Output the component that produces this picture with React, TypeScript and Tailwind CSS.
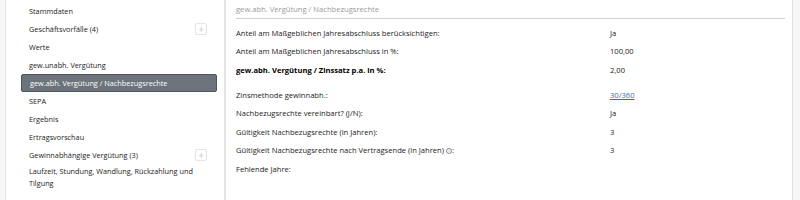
import React from "react";

const navItems: { label: string; plus?: boolean; active?: boolean }[] = [
  { label: "Stammdaten" },
  { label: "Geschäftsvorfälle (4)", plus: true },
  { label: "Werte" },
  { label: "gew.unabh. Vergütung" },
  { label: "gew.abh. Vergütung / Nachbezugsrechte", active: true },
  { label: "SEPA" },
  { label: "Ergebnis" },
  { label: "Ertragsvorschau" },
  { label: "Gewinnabhängige Vergütung (3)", plus: true },
  { label: "Laufzeit, Stundung, Wandlung, Rückzahlung und Tilgung" },
];

const rows: { label: string; value?: string; bold?: boolean; link?: boolean; gap?: boolean; info?: boolean }[] = [
  { label: "Anteil am Maßgeblichen Jahresabschluss berücksichtigen:", value: "Ja" },
  { label: "Anteil am Maßgeblichen Jahresabschluss in %:", value: "100,00" },
  { label: "gew.abh. Vergütung / Zinssatz p.a. in %:", value: "2,00", bold: true },
  { label: "Zinsmethode gewinnabh.:", value: "30/360", link: true, gap: true },
  { label: "Nachbezugsrechte vereinbart? (J/N):", value: "Ja" },
  { label: "Gültigkeit Nachbezugsrechte (in Jahren):", value: "3" },
  { label: "Gültigkeit Nachbezugsrechte nach Vertragsende (in Jahren)", value: "3", info: true },
  { label: "Fehlende Jahre:" },
];

export default function App() {
  return (
    <div
      className="w-[800px] h-[200px] flex bg-[#f7f7f7] overflow-hidden text-[7.3px] text-[#222]"
      style={{ fontFamily: '"Open Sans", "Noto Sans", sans-serif' }}
    >
      <div className="w-[5px] shrink-0" />
      <div className="flex flex-1 bg-white border-l border-r border-[#e2e2e2]">
        {/* Sidebar */}
        <div className="w-[220px] shrink-0 border-r-2 border-[#e6e6e6] pl-[15px] pr-[7px] pt-[2px]">
          {navItems.map((item) => (
            <div
              key={item.label}
              className={
                item.active
                  ? "flex items-center justify-between min-h-[18px] px-[8px] rounded-[2px] bg-[#6c737b] border border-[#4f565d] text-white"
                  : "flex items-center justify-between min-h-[18px] px-[8px] py-[1px] leading-[12px]"
              }
            >
              <span className={item.active ? "" : "max-w-[180px]"}>{item.label}</span>
              {item.plus && (
                <span className="w-[12px] h-[12px] mr-[2px] flex items-center justify-center border border-[#e3e3e3] rounded-[2px] text-[#c8c8c8] text-[10px] leading-none">
                  +
                </span>
              )}
            </div>
          ))}
        </div>
        {/* Main */}
        <div className="flex-1 pl-[10px] pr-[7px] pt-[4px] text-[7.6px]">
          <div className="text-[#9a9a9a] pb-[3px] border-b border-[#cfcfcf] h-[15px]">
            gew.abh. Vergütung / Nachbezugsrechte
          </div>
          <div className="pt-[5px]">
            {rows.map((r) => (
              <div
                key={r.label}
                className={`flex items-center h-[18.5px] ${r.gap ? "mt-[6.5px]" : ""}`}
              >
                <div className={`w-[374px] ${r.bold ? "font-bold text-black" : ""}`}>
                  {r.label}
                  {r.info && (
                    <>
                      {" "}
                      <span className="inline-flex w-[6px] h-[6px] rounded-full border border-[#888] text-[4px] items-center justify-center text-[#777] align-middle">
                        i
                      </span>
                      :
                    </>
                  )}
                </div>
                {r.value && (
                  <div className={r.link ? "text-[#2f6fb3] underline" : ""}>{r.value}</div>
                )}
              </div>
            ))}
          </div>
        </div>
      </div>
      <div className="w-[7px] shrink-0" />
    </div>
  );
}
